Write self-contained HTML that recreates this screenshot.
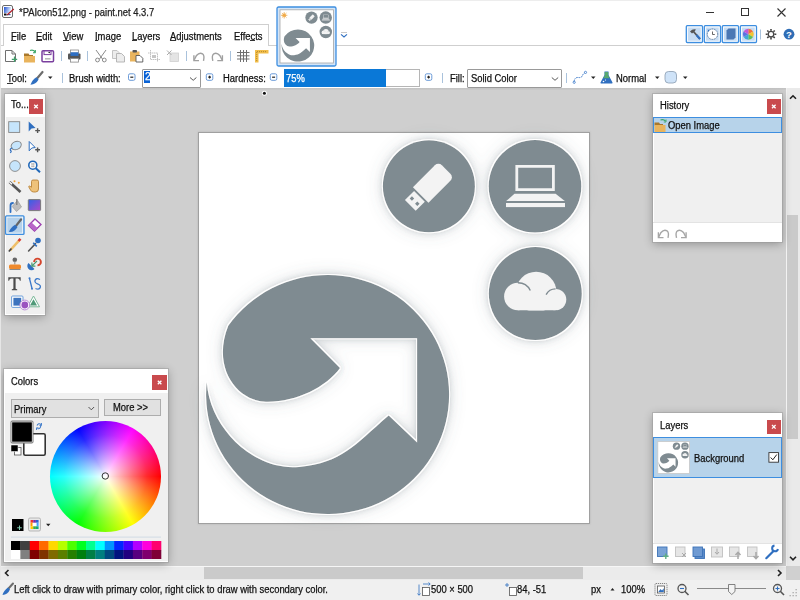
<!DOCTYPE html>
<html><head><meta charset="utf-8">
<style>
*{box-sizing:border-box}
html,body{margin:0;padding:0;width:800px;height:600px;overflow:hidden;background:#fff}
body{position:relative;font-family:"Liberation Sans",sans-serif;color:#000}
.a{position:absolute}
.t{position:absolute;font-size:10px;line-height:10px;white-space:nowrap;color:#111;transform-origin:0 0;transform:scaleX(.94);-webkit-text-stroke:0.25px currentColor}
svg{position:absolute;overflow:visible}
</style></head><body>

<!-- ===== top chrome ===== -->
<div class="a" style="left:0;top:0;width:800px;height:88px;background:#fff"></div>

<!-- title -->
<div class="t" style="left:19px;top:8px;color:#222">*PAIcon512.png - paint.net 4.3.7</div>
<!-- window controls -->
<div class="a" style="left:706px;top:12px;width:8px;height:1px;background:#333"></div>
<div class="a" style="left:741px;top:8px;width:8px;height:8px;border:1px solid #333"></div>
<svg style="left:777px;top:8px" width="9" height="9"><path d="M0.5 0.5L8.5 8.5M8.5 0.5L0.5 8.5" stroke="#333" stroke-width="1.1"/></svg>

<!-- menu tab -->
<div class="a" style="left:3px;top:24px;width:266px;height:22px;border:1px solid #cfcfcf;border-bottom:none;background:#fff"></div>
<div class="a" style="left:268px;top:45px;width:532px;height:1px;background:#cfcfcf"></div>
<div class="a" style="left:0;top:45px;width:4px;height:1px;background:#cfcfcf"></div>
<div class="t" style="left:11px;top:31.5px">File</div>
<div class="t" style="left:36px;top:31.5px">Edit</div>
<div class="t" style="left:63px;top:31.5px">View</div>
<div class="t" style="left:95px;top:31.5px">Image</div>
<div class="t" style="left:132px;top:31.5px">Layers</div>
<div class="t" style="left:170px;top:31.5px">Adjustments</div>
<div class="t" style="left:234px;top:31.5px">Effects</div>
<div class="a" style="left:11px;top:40px;width:5px;height:1px;background:#333"></div>
<div class="a" style="left:36px;top:40px;width:6px;height:1px;background:#333"></div>
<div class="a" style="left:63px;top:40px;width:6px;height:1px;background:#333"></div>
<div class="a" style="left:95px;top:40px;width:3px;height:1px;background:#333"></div>
<div class="a" style="left:132px;top:40px;width:5px;height:1px;background:#333"></div>
<div class="a" style="left:170px;top:40px;width:6px;height:1px;background:#333"></div>
<div class="a" style="left:250px;top:40px;width:5px;height:1px;background:#333"></div>



<!-- title icon -->
<svg style="left:0;top:0" width="800" height="90" viewBox="0 0 800 90">
<rect x="2.5" y="5.5" width="10" height="12" rx="1.5" fill="#fff" stroke="#6b6b6b" stroke-width="1"/>
<defs><linearGradient id="tig" x1="0" y1="0" x2="1" y2="0.3"><stop offset="0" stop-color="#1f4fd0"/><stop offset="1" stop-color="#e0eeff"/></linearGradient></defs>
<rect x="4" y="7" width="7" height="6" fill="url(#tig)"/>
<rect x="4" y="13.5" width="2.5" height="2" fill="#111"/>
<rect x="6.5" y="14" width="4" height="1.2" fill="#3a5a9a"/>
<path d="M7 15 L13.8 9" stroke="#b3202a" stroke-width="1.2"/>
<!-- New -->
<path d="M5.5 50.5 H12 L15.5 54 V61.5 H5.5 Z" fill="#fff" stroke="#707070" stroke-width="1"/>
<path d="M12 50.5 V54 H15.5" fill="none" stroke="#707070" stroke-width="1"/>
<path d="M14.5 56.5 V62 M11.8 59.3 H17.2" stroke="#3fa16b" stroke-width="1.2"/>
<!-- Open -->
<path d="M24 53.5 H28.5 L29.5 55 H33 V57 H24 Z" fill="#a9782c"/>
<rect x="24" y="56" width="11" height="6.5" fill="#e9b45d"/>
<path d="M30 50.5 Q33 49.5 35 51.5" fill="none" stroke="#3aa565" stroke-width="1.3"/>
<path d="M35.5 50 V52.8 H33" fill="#3aa565" stroke="#3aa565" stroke-width="0.8"/>
<!-- Save -->
<rect x="42" y="50.8" width="11.5" height="11" rx="1" fill="#fff" stroke="#7a3f9e" stroke-width="1.5"/>
<rect x="44" y="51" width="7" height="3.6" fill="#fff" stroke="#7a3f9e" stroke-width="1"/>
<circle cx="49.2" cy="52.5" r="0.8" fill="#222"/>
<rect x="45" y="58" width="5.5" height="1.6" fill="#b9b9b9"/>
<!-- separators -->
<rect x="61" y="51" width="1" height="10" fill="#a9c2dc"/>
<rect x="87" y="51" width="1" height="10" fill="#a9c2dc"/>
<rect x="186" y="51" width="1" height="10" fill="#a9c2dc"/>
<rect x="230" y="51" width="1" height="10" fill="#a9c2dc"/>
<!-- Print -->
<rect x="70.5" y="50" width="8" height="3" fill="#fff" stroke="#888" stroke-width="0.8"/>
<rect x="68" y="53.5" width="12.5" height="6" rx="1" fill="#555"/>
<rect x="70.5" y="52.3" width="8" height="3.6" fill="#2e6fc4"/>
<rect x="70.5" y="58.5" width="8" height="3.6" fill="#fff" stroke="#888" stroke-width="0.8"/>
<!-- Cut -->
<path d="M96 50 L102.5 59 M106 50 L99.5 59" stroke="#8a8a8a" stroke-width="1"/>
<circle cx="97.5" cy="60" r="1.9" fill="none" stroke="#8a8a8a" stroke-width="1"/>
<circle cx="104.3" cy="60" r="1.9" fill="none" stroke="#8a8a8a" stroke-width="1"/>
<!-- Copy -->
<path d="M112.5 50.5 H117 L119 52.5 V58.5 H112.5 Z" fill="#ececec" stroke="#bdbdbd" stroke-width="0.9"/>
<path d="M116.5 53.5 H121.5 L124.5 56.5 V62 H116.5 Z" fill="#ececec" stroke="#b0b0b0" stroke-width="0.9"/>
<!-- Paste -->
<rect x="130" y="51.5" width="9.5" height="10" fill="#e9b45d"/>
<rect x="132.5" y="50" width="4.5" height="2.5" rx="0.8" fill="#555"/>
<path d="M136 55.5 H140 L142.8 58.3 V62 H136 Z" fill="#fff" stroke="#555" stroke-width="0.9"/>
<!-- Crop -->
<path d="M150.5 50 V59.5 H160 M148 53 H157.5 V62" fill="none" stroke="#bcbcbc" stroke-width="0.9" stroke-dasharray="1.5 0.5"/>
<rect x="152" y="55" width="4" height="3" fill="#c5c5c5"/>
<!-- Deselect -->
<rect x="170" y="53" width="8.5" height="8.5" fill="#e4e4e4" stroke="#cfcfcf" stroke-width="0.8"/>
<path d="M167 50.5 L171.5 55 M171.5 50.5 L167 55" stroke="#ababab" stroke-width="1"/>
<!-- Undo -->
<path d="M203.5 60.8 Q204.8 55.5 202.5 53.8 Q199.5 52 196.5 55.5 L194.3 59.8" fill="none" stroke="#a0a0a0" stroke-width="1.4"/>
<path d="M193.9 55.3 V60.6 H199" fill="none" stroke="#a0a0a0" stroke-width="1.4"/>
<!-- Redo -->
<path d="M212.8 60.8 Q211.5 55.5 213.8 53.8 Q216.8 52 219.8 55.5 L222 59.8" fill="none" stroke="#a0a0a0" stroke-width="1.4"/>
<path d="M222.4 55.3 V60.6 H217.3" fill="none" stroke="#a0a0a0" stroke-width="1.4"/>
<!-- Grid -->
<path d="M240.5 50 V62 M243.5 50 V62 M246.5 50 V62 M237 52.5 H249.5 M237 55.8 H249.5 M237 59 H249.5" stroke="#707070" stroke-width="1"/>
<!-- Ruler -->
<path d="M255 50 H268.5 V53.5 H258.5 V62.5 H255 Z" fill="#f2bd4a"/>
<path d="M257 51.6 H267 M256.7 52 V61" stroke="#8a6a20" stroke-width="0.6" stroke-dasharray="1 1"/>
</svg>


<!-- right toolbar toggles -->
<svg style="left:0;top:0" width="800" height="70" viewBox="0 0 800 70">
 <g fill="#c6dcf3" stroke="#3d8ee0" stroke-width="1.3">
  <rect x="686.3" y="25.7" width="16.2" height="16.8" rx="1"/>
  <rect x="704.3" y="25.7" width="16.2" height="16.8" rx="1"/>
  <rect x="722.3" y="25.7" width="16.2" height="16.8" rx="1"/>
  <rect x="740.3" y="25.7" width="16.2" height="16.8" rx="1"/>
 </g>
 <g fill="none" stroke="#fff" stroke-width="0.9">
  <rect x="687.6" y="27" width="13.6" height="14.2"/>
  <rect x="705.6" y="27" width="13.6" height="14.2"/>
  <rect x="723.6" y="27" width="13.6" height="14.2"/>
  <rect x="741.6" y="27" width="13.6" height="14.2"/>
 </g>
 <!-- hammer -->
 <path d="M690 31.5 Q692.5 28.5 696 29.5 L694.5 31.5 L692 33.5 Z" fill="#555"/>
 <path d="M693 31 L700 39" stroke="#555" stroke-width="1.8"/>
 <path d="M696.5 35 L700 39" stroke="#2f6fc0" stroke-width="2"/>
 <!-- history clock -->
 <circle cx="712.5" cy="34.2" r="5.2" fill="#fff" stroke="#3a5f8a" stroke-width="0.8" stroke-dasharray="1.2 0.6"/>
 <path d="M712.5 31.5 V34.5 H714.8" fill="none" stroke="#555" stroke-width="0.9"/>
 <path d="M707.5 29.5 L709.5 30 L708.3 31.8 Z" fill="#2f6fc0"/>
 <!-- layers -->
 <path d="M726.5 30.5 L728.5 28.5 H735.5 V37.5 L733.5 39.5 H726.5 Z" fill="#4a77b4"/>
 <!-- colors -->
 <g transform="translate(748.3 34.2)">
  <path d="M0 0 L0 -5.5 A5.5 5.5 0 0 1 4.76 -2.75 Z" fill="#f2703c"/>
  <path d="M0 0 L4.76 -2.75 A5.5 5.5 0 0 1 4.76 2.75 Z" fill="#f5c431"/>
  <path d="M0 0 L4.76 2.75 A5.5 5.5 0 0 1 0 5.5 Z" fill="#5fc05a"/>
  <path d="M0 0 L0 5.5 A5.5 5.5 0 0 1 -4.76 2.75 Z" fill="#3fa9d8"/>
  <path d="M0 0 L-4.76 2.75 A5.5 5.5 0 0 1 -4.76 -2.75 Z" fill="#5b72e0"/>
  <path d="M0 0 L-4.76 -2.75 A5.5 5.5 0 0 1 0 -5.5 Z" fill="#c25ad6"/>
 </g>
 <rect x="760" y="29.5" width="1" height="10" fill="#a9c2dc"/>
 <!-- gear -->
 <g transform="translate(771 34.2)" fill="none" stroke="#444">
  <circle r="2.8" stroke-width="1.4"/>
  <path d="M0 -5.3 V-3.4 M0 5.3 V3.4 M-5.3 0 H-3.4 M5.3 0 H3.4 M-3.75 -3.75 L-2.4 -2.4 M3.75 3.75 L2.4 2.4 M-3.75 3.75 L-2.4 2.4 M3.75 -3.75 L2.4 -2.4" stroke-width="1.6"/>
 </g>
 <!-- help -->
 <circle cx="789" cy="34.2" r="5.4" fill="#2f6db5"/>
 <text x="789" y="37.9" font-family="Liberation Sans" font-weight="bold" font-size="9.5" fill="#fff" text-anchor="middle">?</text>
 <!-- thumbnail -->
 <rect x="277" y="7" width="59" height="59" rx="1.5" fill="#d3e5f8" stroke="#3d8ee0" stroke-width="1.3"/>
 <rect x="280" y="9.8" width="53.4" height="53.2" fill="#fff" stroke="#a6a6a6" stroke-width="0.8"/>
 <use href="#shapes" x="280.5" y="10.3" width="52.5" height="52.5"/>
 <use href="#glyphs" x="280.5" y="10.3" width="52.5" height="52.5"/>
 <g transform="translate(284.2 15.3)" stroke="#f0a848" stroke-width="0.8">
  <circle r="1.8" fill="#f5b85a" stroke="none"/>
  <path d="M0 -3.2 V3.2 M-3.2 0 H3.2 M-2.3 -2.3 L2.3 2.3 M-2.3 2.3 L2.3 -2.3"/>
 </g>
 <!-- dropdown chevron -->
 <rect x="341" y="32" width="6" height="1" fill="#c9c9c9"/>
 <path d="M341 34.3 L344 37 L347 34.3" fill="none" stroke="#2f6fc0" stroke-width="1.1"/>
</svg>

<!-- ===== workspace ===== -->

<div class="a" style="left:0;top:88px;width:786px;height:478px;background:#cfcfcf"></div>
<div class="a" style="left:0;top:88px;width:786px;height:2px;background:linear-gradient(#c2c2c2,#cbcbcb)"></div>

<!-- canvas -->
<div class="a" style="left:198px;top:132px;width:392px;height:392px;background:#a0a0a0;box-shadow:0 0 2px #b4b4b4"></div>
<div class="a" style="left:199px;top:133px;width:390px;height:390px;background:#fff"></div>


<!-- canvas art -->
<svg style="left:0;top:0;width:0;height:0">
<defs>
<filter id="sh" x="-25%" y="-25%" width="150%" height="150%">
 <feMorphology in="SourceAlpha" operator="dilate" radius="0.8" result="dil"/>
 <feGaussianBlur in="SourceAlpha" stdDeviation="2.5" result="b1"/>
 <feGaussianBlur in="SourceAlpha" stdDeviation="8" result="b2"/>
 <feFlood flood-color="#5a6870" flood-opacity="0.3"/>
 <feComposite in2="b1" operator="in" result="s1"/>
 <feFlood flood-color="#5a6870" flood-opacity="0.28"/>
 <feComposite in2="b2" operator="in" result="s2"/>
 <feFlood flood-color="#ffffff"/>
 <feComposite in2="dil" operator="in" result="rim"/>
 <feMerge><feMergeNode in="s2"/><feMergeNode in="s1"/><feMergeNode in="rim"/><feMergeNode in="SourceGraphic"/></feMerge>
</filter>
<symbol id="shapes" viewBox="198 132 391 391">
 <path d="M206.75 382.25 C209.9 428.7 254.4 471.4 299.1 466.9 C342.6 462.4 352.9 446.4 388.7 415.5 L417.1 442.5 L417.1 338.2 L310.4 338.2 L340 368 C326.2 387.2 295 402.5 265.9 401.7 C236.5 400.8 211.5 367.1 228.3 325.7 A121.5 119.5 0 1 1 206.75 382.25 Z" fill="#7f8b91"/>
 <circle cx="428.9" cy="186.2" r="46" fill="#7f8b91"/>
 <circle cx="535" cy="186.3" r="46.3" fill="#7f8b91"/>
 <circle cx="535.3" cy="293.6" r="46.5" fill="#7f8b91"/>
</symbol>
<symbol id="glyphs" viewBox="198 132 391 391">
 <g transform="translate(420.7 195) rotate(-45)" fill="#f3f3f3">
  <path d="M0 -11 H31 A5 5 0 0 1 36 -6 V6 A5 5 0 0 1 31 11 H0 Z"/>
  <path d="M-14.7 -7.6 H-1.8 V7.6 H-14.7 Z M-10.2 -5.4 V-2.2 H-7 V-5.4 Z M-10.2 2.2 V5.4 H-7 V2.2 Z" fill-rule="evenodd"/>
 </g>
 <path d="M515.4 164.9 H554.8 V191 H515.4 Z M518.2 167.7 V188.2 H552 V167.7 Z" fill="#f3f3f3" fill-rule="evenodd"/>
 <path d="M514.5 193.7 H555.6 L564.8 201 H506.2 Z" fill="#f3f3f3"/>
 <rect x="506" y="203" width="59" height="4.1" fill="#f3f3f3"/>
 <clipPath id="cc"><rect x="490" y="260" width="90" height="50.6"/></clipPath>
 <g fill="#f3f3f3" clip-path="url(#cc)">
  <circle cx="536.15" cy="292.05" r="20.3"/>
  <rect x="517.9" y="292" width="37.7" height="18.5"/>
  <circle cx="517.9" cy="296.6" r="13.8"/>
  <circle cx="555.6" cy="299.6" r="10.7"/>
 </g>
 <path d="M517.9 282.8 A13.8 13.8 0 0 1 530.3 290.5" fill="none" stroke="#7f8b91" stroke-width="1.4"/>
 <path d="M546.1 294.6 A10.7 10.7 0 0 1 555.6 288.9" fill="none" stroke="#7f8b91" stroke-width="1.4"/>
</symbol>
</defs>
</svg>
<svg style="left:198px;top:132px" width="391" height="391" viewBox="198 132 391 391">
 <g filter="url(#sh)"><use href="#shapes" x="198" y="132" width="391" height="391"/></g>
 <use href="#glyphs" x="198" y="132" width="391" height="391"/>
</svg>

<!-- scrollbars -->
<div class="a" style="left:786px;top:88px;width:14px;height:478px;background:#eaeaea;border-left:1px solid #f2f2f2"></div>
<div class="a" style="left:787px;top:215px;width:11px;height:224px;background:#cacaca"></div>
<div class="a" style="left:0;top:566px;width:786px;height:14px;background:#ebebeb;border-top:1px solid #f6f6f6"></div>
<div class="a" style="left:204px;top:567px;width:379px;height:12px;background:#cacaca"></div>
<div class="a" style="left:786px;top:566px;width:14px;height:14px;background:#d0d0d0"></div>


<!-- tool options bar -->
<div class="t" style="left:7px;top:74px">Tool:</div>
<div class="a" style="left:7px;top:83px;width:6px;height:1px;background:#333"></div>
<div class="t" style="left:69px;top:74px">Brush width:</div>
<div class="a" style="left:142px;top:69px;width:59px;height:19px;border:1px solid #999;border-radius:1px;background:#fff"></div>
<div class="a" style="left:144.2px;top:71px;width:6px;height:11.7px;background:#0a63d6"></div>
<div class="t" style="left:144.8px;top:71.3px;color:#fff;font-size:11px;line-height:11px">2</div>
<div class="t" style="left:223px;top:74px">Hardness:</div>
<div class="a" style="left:284px;top:69px;width:136px;height:18px;border:1px solid #b5b5b5;border-left:none;background:#fff"></div>
<div class="a" style="left:284px;top:69px;width:102px;height:18px;background:#0a78d7"></div>
<div class="t" style="left:286px;top:74px;color:#fff">75%</div>
<div class="t" style="left:450px;top:74px">Fill:</div>
<div class="a" style="left:467px;top:69px;width:95px;height:19px;border:1px solid #999;border-radius:1px;background:#fff"></div>
<div class="t" style="left:471px;top:74px">Solid Color</div>
<div class="t" style="left:616px;top:74px">Normal</div>
<svg style="left:0;top:64px" width="800" height="30" viewBox="0 64 800 30">
 <!-- brush -->
 <path d="M42.5 72 L37 78.5" stroke="#6d6d6d" stroke-width="2.2" stroke-linecap="round"/>
 <path d="M36.3 77.3 L38.6 79.6 Q36 84.5 30.5 84.8 Q32 80 36.3 77.3 Z" fill="#2f6fc0"/>
 <path d="M48 76.5 H52.5 L50.25 79 Z" fill="#222"/>
 <rect x="62" y="73" width="1" height="10" fill="#a9c2dc"/>
 <!-- minus/plus buttons -->
 <rect x="128.5" y="73.8" width="6.5" height="6.5" rx="1.5" fill="#fff" stroke="#6a9ad8" stroke-width="1"/>
 <rect x="130.3" y="76.6" width="3" height="1.2" fill="#222"/>
 <path d="M190 77.5 L193.2 80.3 L196.4 77.5" fill="none" stroke="#444" stroke-width="0.9"/>
 <rect x="206.3" y="73.8" width="6.5" height="6.5" rx="1.5" fill="#fff" stroke="#6a9ad8" stroke-width="1"/>
 <path d="M208.2 77.1 H211 M209.6 75.7 V78.5" stroke="#222" stroke-width="1.1"/>
 <rect x="270.3" y="73.8" width="6.5" height="6.5" rx="1.5" fill="#fff" stroke="#6a9ad8" stroke-width="1"/>
 <rect x="272.1" y="76.6" width="3" height="1.2" fill="#222"/>
 <rect x="425.3" y="73.8" width="6.5" height="6.5" rx="1.5" fill="#fff" stroke="#6a9ad8" stroke-width="1"/>
 <path d="M427.2 77.1 H430 M428.6 75.7 V78.5" stroke="#222" stroke-width="1.1"/>
 <rect x="442" y="73" width="1" height="10" fill="#a9c2dc"/>
 <path d="M551.8 77.5 L555 80.3 L558.2 77.5" fill="none" stroke="#444" stroke-width="0.9"/>
 <rect x="566" y="73" width="1" height="10" fill="#a9c2dc"/>
 <!-- curve icon -->
 <path d="M574 82 Q574.5 77 578.5 77.5 Q581.5 78 582.5 75.5 Q583.5 73 585.5 72.5" fill="none" stroke="#3a78c9" stroke-width="1" stroke-dasharray="1.6 0.8"/>
 <circle cx="574.2" cy="82.3" r="1.1" fill="#fff" stroke="#3a78c9" stroke-width="0.8"/>
 <circle cx="585.5" cy="72.4" r="1.1" fill="#fff" stroke="#3a78c9" stroke-width="0.8"/>
 <path d="M591 76.5 H595.5 L593.25 79 Z" fill="#222"/>
 <!-- flask -->
 <path d="M604.5 71.5 H608.5 V75 L612.5 82.5 Q612.8 83.5 611.8 83.5 H601.2 Q600.2 83.5 600.5 82.5 L604.5 75 Z" fill="#2f6fc0"/>
 <path d="M604.7 72 H608.3 V75.5 L609.8 78.3 H603.2 L604.7 75.5 Z" fill="#58a870"/>
 <circle cx="603.5" cy="81.5" r="0.8" fill="#fff"/>
 <circle cx="605.5" cy="80" r="0.6" fill="#fff"/>
 <path d="M655 76.5 H659.5 L657.25 79 Z" fill="#222"/>
 <!-- shape icon -->
 <rect x="665" y="71.5" width="11.5" height="11.5" rx="3.5" fill="#cfe3f8" stroke="#8a9cb0" stroke-width="0.8"/>
 <path d="M683 76.5 H687.5 L685.25 79 Z" fill="#222"/>
 <!-- brush cursor -->
 <circle cx="264.4" cy="93.3" r="2.5" fill="#fff"/>
 <circle cx="264.4" cy="93.3" r="1.5" fill="#111"/>
</svg>

<!-- status bar -->
<div class="a" style="left:0;top:580px;width:800px;height:20px;background:#f0f0f0"></div>
<div class="t" style="left:14px;top:585px">Left click to draw with primary color, right click to draw with secondary color.</div>
<div class="t" style="left:431px;top:585px">500 × 500</div>
<div class="t" style="left:517px;top:585px">84, -51</div>
<div class="t" style="left:591px;top:585px">px</div>
<div class="t" style="left:621px;top:585px">100%</div>

<!-- tools panel -->
<div class="a" style="left:5px;top:94px;width:40px;height:221px;background:#f0f0f0;border:1px solid #fff;border-right:none;border-top:none;box-shadow:0 0 0 1px rgba(150,150,150,.45),0 2px 9px rgba(0,0,0,.3)"></div>
<div class="a" style="left:5px;top:94px;width:40px;height:23px;background:#fff"></div>
<div class="t" style="left:11px;top:100px">To...</div>
<div class="a" style="left:29px;top:99px;width:14px;height:15px;background:#c94a4d"></div>

<svg style="left:0;top:90px" width="50" height="230" viewBox="0 90 50 230">
 <!-- close x -->
 <path d="M34.2 104.7 L37.8 108.3 M37.8 104.7 L34.2 108.3" stroke="#fff" stroke-width="1.3"/>
 <!-- rect select -->
 <rect x="8.7" y="121.7" width="11" height="10.7" fill="#c6e5fc" stroke="#858585" stroke-width="0.9"/>
 <!-- move selected -->
 <path d="M28.7 121.5 L35.6 128 L31.5 128.5 L28.7 131.6 Z" fill="#2f6fc0"/>
 <path d="M37.6 128.3 V133 M35.2 130.6 H40" stroke="#555" stroke-width="1.4"/>
 <!-- lasso -->
 <ellipse cx="16.2" cy="145.5" rx="5.3" ry="4" transform="rotate(-25 16.2 145.5)" fill="#c6e5fc" stroke="#858585" stroke-width="0.9"/>
 <path d="M12.5 148 Q9.5 148.5 10.5 150.5 Q12 151 10.3 152.8" fill="none" stroke="#2f6fc0" stroke-width="1.2"/>
 <!-- move selection -->
 <path d="M29.2 141.5 L35.2 147.5 L31.8 148 L29.2 150.8 Z" fill="#fff" stroke="#2f6fc0" stroke-width="1"/>
 <path d="M37.6 147.5 V152.2 M35.2 149.8 H40" stroke="#555" stroke-width="1.4"/>
 <!-- ellipse select -->
 <circle cx="15" cy="166" r="5.4" fill="#c6e5fc" stroke="#858585" stroke-width="0.9"/>
 <!-- zoom -->
 <circle cx="32.8" cy="165.2" r="4" fill="#fff" stroke="#1f67b8" stroke-width="1.6"/>
 <path d="M35.8 168.2 L40 172.2" stroke="#1f67b8" stroke-width="2"/>
 <path d="M31.3 164 h3 M31.3 166.4 h3 M32 163 v4.4 M33.8 163 v4.4" stroke="#999" stroke-width="0.6"/>
 <!-- magic wand -->
 <path d="M9.5 182 L20.5 192" stroke="#555" stroke-width="2.6"/>
 <path d="M9.5 182 L12 184.3" stroke="#fff" stroke-width="1.4"/>
 <circle cx="14.5" cy="181.2" r="1" fill="#eea33d"/>
 <circle cx="18.8" cy="182.8" r="1" fill="#eea33d"/>
 <!-- hand -->
 <path d="M31.5 181.5 Q31.5 180 33 180 H37 Q38.5 180 38.5 181.5 V189 Q38.5 192 35.5 192 H33.5 Q31.5 192 30.5 190 L28.8 187 Q28.5 186 29.5 186 L31.5 187.2 Z" fill="#eec27a" stroke="#b27a2c" stroke-width="0.8"/>
 <!-- bucket -->
 <path d="M17.5 200.5 L21.5 207 L16.5 211.5 L12.2 206.5 Z" fill="#bdbdbd" stroke="#999" stroke-width="0.7"/>
 <path d="M16.8 199 V205" stroke="#777" stroke-width="1.2"/>
 <path d="M10.5 212 V205.5 Q10.5 203 13 203" fill="none" stroke="#2f6fc0" stroke-width="1.8" stroke-linecap="round"/>
 <!-- gradient -->
 <defs><linearGradient id="gr" x1="0" y1="0" x2="1" y2="1"><stop offset="0" stop-color="#2f62e8"/><stop offset="1" stop-color="#b048c8"/></linearGradient></defs>
 <rect x="28.3" y="199.6" width="12.3" height="11" rx="0.8" fill="url(#gr)" stroke="#7a7a7a" stroke-width="1"/>
 <!-- selected paintbrush -->
 <rect x="5.6" y="215.8" width="18.4" height="18.6" rx="1" fill="#b5d1ea" stroke="#3d8ee0" stroke-width="1.3"/>
 <rect x="6.9" y="217.1" width="15.8" height="16" fill="none" stroke="#fff" stroke-width="0.7"/>
 <path d="M21 219.5 L16.2 225.6" stroke="#666" stroke-width="2.3" stroke-linecap="round"/>
 <path d="M15 224.8 L17.5 227 Q14.5 232.5 9 232 Q10.5 227.5 15 224.8 Z" fill="#2f6fc0"/>
 <!-- eraser -->
 <path d="M28.5 225.5 L35 219 L41 224.5 L34.5 231 Z" fill="#fff" stroke="#9b3dae" stroke-width="1.3"/>
 <path d="M28.5 225.5 L31.5 222.5 L37.5 228 L34.5 231 Z" fill="#b865c8"/>
 <!-- pencil -->
 <path d="M10 250.5 L19.2 240.3" stroke="#eebf6a" stroke-width="2.6"/>
 <path d="M18.5 241 L20.5 238.8" stroke="#d83a2e" stroke-width="2.6"/>
 <path d="M8.8 251.5 L11.5 248.5" stroke="#444" stroke-width="1.6"/>
 <!-- color picker -->
 <path d="M28.6 251 L35.5 243.6" stroke="#555" stroke-width="1.6" stroke-linecap="round"/>
 <path d="M33.2 242.8 L36.8 246.4" stroke="#2f6fc0" stroke-width="1.6"/>
 <circle cx="38" cy="240.5" r="2.8" fill="#2f6fc0"/>
 <!-- clone stamp -->
 <circle cx="14.8" cy="259.8" r="2.3" fill="#666"/>
 <rect x="14.2" y="261.5" width="1.2" height="3" fill="#999"/>
 <rect x="9" y="264.5" width="12" height="4.5" rx="1.5" fill="#ef8a2e"/>
 <rect x="9.5" y="269" width="11" height="1" fill="#8a8a8a"/>
 <!-- recolor -->
 <path d="M34.1 262 A3.4 3.4 0 1 1 37.5 265.4" fill="none" stroke="#d5452c" stroke-width="1.9"/>
 <path d="M34.47 268.97 A4.2 4.2 0 0 1 28.53 263.03 Z" fill="#2f6fc0"/>
 <path d="M37 261 L32.3 265.7 M31.9 262.6 V266.1 H35.4" fill="none" stroke="#4a9a72" stroke-width="1.2"/>
 <!-- text -->
 <path d="M8.3 277.3 H20.7 V280.8 H19.9 Q19.6 278.6 17.6 278.6 H15.6 V288.6 Q15.6 289.3 17.2 289.3 V290.2 H11.8 V289.3 Q13.4 289.3 13.4 288.6 V278.6 H11.4 Q9.4 278.6 9.1 280.8 H8.3 Z" fill="#4a4a4a"/>
 <!-- line/curve -->
 <path d="M29.5 278.5 L32 288.5" stroke="#3a78c9" stroke-width="1.3"/>
 <path d="M40 279.5 Q36 277.5 35 280.5 Q34.5 283 38 284 Q41.5 285.5 40 288 Q38.5 290 35.5 288.5" fill="none" stroke="#3a78c9" stroke-width="1.3"/>
 <circle cx="29.5" cy="278.3" r="1" fill="#3a78c9"/>
 <circle cx="32" cy="288.8" r="1" fill="#3a78c9"/>
 <!-- shapes -->
 <rect x="11.6" y="296" width="11.4" height="11.4" rx="1" fill="#fff" stroke="#6d9fdb" stroke-width="1"/>
 <rect x="13.4" y="297.8" width="7.8" height="7.8" fill="#3d74be"/>
 <path d="M33.5 296 L39.5 306.8 H27.5 Z" fill="#fff" stroke="#79b898" stroke-width="1"/>
 <path d="M33.5 299.3 L37 305.6 H30 Z" fill="#4f9a78"/>
 <circle cx="24.8" cy="305" r="4.9" fill="#fff" stroke="#b98ad8" stroke-width="1"/>
 <circle cx="24.8" cy="305" r="3.4" fill="#9a52c0"/>
</svg>

<!-- colors panel -->
<div class="a" style="left:4px;top:369px;width:164px;height:193px;background:#f0f0f0;border:1px solid #fff;border-right:none;border-top:none;box-shadow:0 0 0 1px rgba(150,150,150,.45),0 2px 9px rgba(0,0,0,.3)"></div>
<div class="a" style="left:4px;top:369px;width:164px;height:24px;background:#fff"></div>
<div class="t" style="left:11px;top:376.6px">Colors</div>
<div class="a" style="left:152px;top:375px;width:15px;height:15px;background:#c94a4d"></div>


<div class="a" style="left:11px;top:399px;width:88px;height:19px;background:#e1e1e1;border:1px solid #adadad"></div>
<div class="t" style="left:14px;top:405px">Primary</div>
<div class="a" style="left:104px;top:399px;width:57px;height:17px;background:#e1e1e1;border:1px solid #adadad"></div>
<div class="t" style="left:113px;top:403px">More &gt;&gt;</div>
<div class="a" style="left:50px;top:420.5px;width:111px;height:111px;border-radius:50%;background:conic-gradient(from 90deg,#f00,#ff0,#0f0,#0ff,#00f,#f0f,#f00)"></div>
<div class="a" style="left:50px;top:420.5px;width:111px;height:111px;border-radius:50%;background:radial-gradient(circle closest-side,#fff 0%,rgba(255,255,255,.7) 25%,rgba(255,255,255,.42) 50%,rgba(255,255,255,.16) 75%,rgba(255,255,255,0) 100%)"></div>
<svg style="left:0;top:360px" width="180" height="210" viewBox="0 360 180 210">
 <path d="M157.8 380.7 L161.4 384.3 M161.4 380.7 L157.8 384.3" stroke="#fff" stroke-width="1.3"/>
 <path d="M88.5 407 L91.3 409.8 L94.1 407" fill="none" stroke="#444" stroke-width="0.9"/>
 <rect x="23.8" y="433.8" width="21.4" height="21.4" rx="1.5" fill="#fff" stroke="#333" stroke-width="1.6"/>
 <rect x="11.3" y="421.3" width="21.4" height="21.4" rx="1" fill="#000" stroke="#777" stroke-width="1.6"/>
 <rect x="11.8" y="422" width="20.4" height="20" fill="none" stroke="#fff" stroke-width="0.6"/>
 <rect x="14.5" y="447.5" width="6.5" height="7.5" fill="#fff" stroke="#555" stroke-width="0.8"/>
 <rect x="11" y="445" width="7" height="6.5" fill="#000" stroke="#fff" stroke-width="0.5"/>
 <path d="M37 425.5 Q38.5 422.5 41 424.5 M40.8 426 Q40 429.5 37.5 428.5" fill="none" stroke="#3a78c9" stroke-width="1.1"/>
 <path d="M41.5 423 V425.5 H39.5 M36.5 430 V427.8 H38.5" fill="none" stroke="#3a78c9" stroke-width="0.9"/>
 <circle cx="105.3" cy="476" r="3.2" fill="none" stroke="#333" stroke-width="1"/>
 <rect x="12" y="519" width="11.5" height="12" fill="#000"/>
 <path d="M19.5 525.5 V530 M17.2 527.8 H21.8" stroke="#7fc8b0" stroke-width="1"/>
 <rect x="28.5" y="518" width="12" height="13" rx="1.5" fill="#e8e8e8" stroke="#aaa" stroke-width="0.8"/>
 <rect x="30.5" y="520" width="8" height="9" fill="#fff"/>
 <path d="M30.5 520 h2.7 v2.7 h-2.7 Z" fill="#e33"/><path d="M33.2 520 h2.7 v2.7 h-2.7 Z" fill="#7a2ea8"/><path d="M35.9 520 h2.7 v2.7 h-2.7 Z" fill="#2a5fd0"/>
 <path d="M30.5 522.7 h2 v3.6 h-2 Z" fill="#f90"/><path d="M36.6 522.7 h2 v3.6 h-2 Z" fill="#3fa0ff"/>
 <path d="M30.5 526.3 h2.7 v2.7 h-2.7 Z" fill="#fc0"/><path d="M33.2 526.3 h2.7 v2.7 h-2.7 Z" fill="#4a4"/><path d="M35.9 526.3 h2.7 v2.7 h-2.7 Z" fill="#1a7"/>
 <path d="M46 523.8 H50.5 L48.25 526.3 Z" fill="#222"/>
 <rect x="11" y="536.5" width="150" height="1.2" fill="#d5dde5"/>
 <rect x="11.00" y="541" width="9.68" height="9.2" fill="#000000"/><rect x="11.00" y="550" width="9.68" height="9" fill="#ffffff"/><rect x="20.38" y="541" width="9.68" height="9.2" fill="#404040"/><rect x="20.38" y="550" width="9.68" height="9" fill="#808080"/><rect x="29.75" y="541" width="9.68" height="9.2" fill="#ff0000"/><rect x="29.75" y="550" width="9.68" height="9" fill="#7f0000"/><rect x="39.12" y="541" width="9.68" height="9.2" fill="#ff6a00"/><rect x="39.12" y="550" width="9.68" height="9" fill="#7f3300"/><rect x="48.50" y="541" width="9.68" height="9.2" fill="#ffd800"/><rect x="48.50" y="550" width="9.68" height="9" fill="#7f6a00"/><rect x="57.88" y="541" width="9.68" height="9.2" fill="#b6ff00"/><rect x="57.88" y="550" width="9.68" height="9" fill="#5b7f00"/><rect x="67.25" y="541" width="9.68" height="9.2" fill="#4cff00"/><rect x="67.25" y="550" width="9.68" height="9" fill="#267f00"/><rect x="76.62" y="541" width="9.68" height="9.2" fill="#00ff21"/><rect x="76.62" y="550" width="9.68" height="9" fill="#007f0e"/><rect x="86.00" y="541" width="9.68" height="9.2" fill="#00ff90"/><rect x="86.00" y="550" width="9.68" height="9" fill="#007f46"/><rect x="95.38" y="541" width="9.68" height="9.2" fill="#00ffff"/><rect x="95.38" y="550" width="9.68" height="9" fill="#007f7f"/><rect x="104.75" y="541" width="9.68" height="9.2" fill="#0094ff"/><rect x="104.75" y="550" width="9.68" height="9" fill="#004a7f"/><rect x="114.12" y="541" width="9.68" height="9.2" fill="#0026ff"/><rect x="114.12" y="550" width="9.68" height="9" fill="#00137f"/><rect x="123.50" y="541" width="9.68" height="9.2" fill="#4800ff"/><rect x="123.50" y="550" width="9.68" height="9" fill="#21007f"/><rect x="132.88" y="541" width="9.68" height="9.2" fill="#b200ff"/><rect x="132.88" y="550" width="9.68" height="9" fill="#57007f"/><rect x="142.25" y="541" width="9.68" height="9.2" fill="#ff00dc"/><rect x="142.25" y="550" width="9.68" height="9" fill="#7f006e"/><rect x="151.62" y="541" width="9.68" height="9.2" fill="#ff006e"/><rect x="151.62" y="550" width="9.68" height="9" fill="#7f0037"/>
</svg>

<!-- history panel -->
<div class="a" style="left:653px;top:94px;width:129px;height:148px;background:#f0f0f0;border:1px solid #fff;border-right:none;border-top:none;box-shadow:0 0 0 1px rgba(150,150,150,.45),0 2px 9px rgba(0,0,0,.3)"></div>
<div class="a" style="left:653px;top:94px;width:129px;height:23px;background:#fff"></div>
<div class="t" style="left:660px;top:100.8px">History</div>
<div class="a" style="left:766.5px;top:99px;width:14.5px;height:15px;background:#c94a4d"></div>
<div class="a" style="left:653px;top:117px;width:129px;height:16px;background:#b7d3ea;border:1px solid #3d8ee0"></div>
<div class="t" style="left:668px;top:121px">Open Image</div>
<div class="a" style="left:653px;top:222px;width:129px;height:1px;background:#e3e3e3"></div>
<div class="a" style="left:653px;top:223px;width:129px;height:19px;background:#fff"></div>

<!-- layers panel -->
<div class="a" style="left:653px;top:413px;width:129px;height:150px;background:#f0f0f0;border:1px solid #fff;border-right:none;border-top:none;box-shadow:0 0 0 1px rgba(150,150,150,.45),0 2px 9px rgba(0,0,0,.3)"></div>
<div class="a" style="left:653px;top:413px;width:129px;height:24px;background:#fff"></div>
<div class="t" style="left:660px;top:420.8px">Layers</div>
<div class="a" style="left:766.7px;top:419.6px;width:14.3px;height:14.4px;background:#c94a4d"></div>
<div class="a" style="left:653px;top:437px;width:129px;height:41px;background:#b7d3ea;border:1px solid #3d8ee0"></div>
<div class="t" style="left:694px;top:453.6px">Background</div>
<div class="a" style="left:653px;top:543px;width:129px;height:1px;background:#e3e3e3"></div>
<div class="a" style="left:653px;top:544px;width:129px;height:19px;background:#fff"></div>

<svg style="left:640px;top:90px" width="160" height="480" viewBox="640 90 160 480">
 <path d="M772 104.7 L775.6 108.3 M775.6 104.7 L772 108.3" stroke="#fff" stroke-width="1.3"/>
 <path d="M772 425 L775.6 428.6 M775.6 425 L772 428.6" stroke="#fff" stroke-width="1.3"/>
 <!-- open image folder -->
 <path d="M654.5 122.5 H659 L660 124 H663 V125.5 H654.5 Z" fill="#a9782c"/>
 <rect x="654.5" y="125" width="11" height="7" fill="#e9b45d"/>
 <path d="M660.5 120 Q663.5 119 665.5 121" fill="none" stroke="#3aa565" stroke-width="1.2"/>
 <path d="M666 119.5 V122 H663.8" fill="none" stroke="#3aa565" stroke-width="0.9"/>
 <!-- undo / redo -->
 <path d="M668 237.8 Q669.3 232.5 667 230.8 Q664 229 661 232.5 L658.8 236.8" fill="none" stroke="#a6a6a6" stroke-width="1.4"/>
 <path d="M658.4 232.3 V237.6 H663.5" fill="none" stroke="#a6a6a6" stroke-width="1.4"/>
 <path d="M676.5 237.8 Q675.2 232.5 677.5 230.8 Q680.5 229 683.5 232.5 L685.7 236.8" fill="none" stroke="#a6a6a6" stroke-width="1.4"/>
 <path d="M686.1 232.3 V237.6 H681" fill="none" stroke="#a6a6a6" stroke-width="1.4"/>
 <!-- layer thumbnail -->
 <rect x="657.8" y="441.5" width="31.6" height="32" fill="#fff" stroke="#c8c8c8" stroke-width="0.8"/>
 <use href="#shapes" x="658" y="441.8" width="31.3" height="31.3"/>
 <use href="#glyphs" x="658" y="441.8" width="31.3" height="31.3"/>
 <!-- checkbox -->
 <rect x="768.9" y="452.6" width="9.6" height="9.6" fill="#fff" stroke="#333" stroke-width="0.9"/>
 <path d="M770.7 457.5 L772.8 459.8 L776.8 454.5" fill="none" stroke="#222" stroke-width="1"/>
 <!-- footer icons -->
 <rect x="657.5" y="547" width="9.5" height="9.5" fill="#7aa3d6" stroke="#3d73b8" stroke-width="0.9"/>
 <path d="M665.8 553.5 V559 M663 556.2 H668.6" stroke="#5fae84" stroke-width="1.4"/>
 <rect x="675.5" y="547" width="9.5" height="9.5" fill="#e6e6e6" stroke="#c0c0c0" stroke-width="0.9"/>
 <path d="M682 553 L686 557 M686 553 L682 557" stroke="#aaa" stroke-width="1"/>
 <rect x="695" y="549" width="9.5" height="9.5" fill="#5c8bc9" stroke="#3d73b8" stroke-width="0.9"/>
 <rect x="693" y="547" width="9.5" height="9.5" fill="#6f9ad2" stroke="#3d73b8" stroke-width="0.9"/>
 <rect x="711.5" y="547" width="11" height="10" fill="#e6e6e6" stroke="#c0c0c0" stroke-width="0.9"/>
 <path d="M717 548.5 V554 M715 552 L717 554.3 L719 552" fill="none" stroke="#aaa" stroke-width="1"/>
 <rect x="729.5" y="547" width="9.5" height="9.5" fill="#e6e6e6" stroke="#c0c0c0" stroke-width="0.9"/>
 <path d="M738 559 V552.5 M735.5 555 L738 552.3 L740.5 555" fill="none" stroke="#a8a8a8" stroke-width="1.5"/>
 <rect x="747.5" y="547" width="9.5" height="9.5" fill="#e6e6e6" stroke="#c0c0c0" stroke-width="0.9"/>
 <path d="M756 552 V558.5 M753.5 556 L756 558.7 L758.5 556" fill="none" stroke="#a8a8a8" stroke-width="1.5"/>
 <path d="M766.3 558.2 L772.8 551.7" stroke="#2f6fc0" stroke-width="2.2" stroke-linecap="round"/>
 <path d="M777.9 549 A2.9 2.9 0 1 1 774.5 545.6" fill="none" stroke="#2f6fc0" stroke-width="2"/>
 <!-- scroll arrows -->
 <path d="M790 98.8 L793 95.8 L796 98.8" fill="none" stroke="#222" stroke-width="1.6"/>
 <path d="M790 556.8 L793 559.8 L796 556.8" fill="none" stroke="#222" stroke-width="1.6"/>
 <path d="M778 570 L781 573 L778 576" fill="none" stroke="#222" stroke-width="1.6"/>
</svg>
<svg style="left:0;top:560px" width="800" height="40" viewBox="0 560 800 40">
 <path d="M8.5 570 L5.5 573 L8.5 576" fill="none" stroke="#222" stroke-width="1.6"/>
 <!-- status brush -->
 <path d="M13 583.5 L8.5 588.5" stroke="#6d6d6d" stroke-width="2" stroke-linecap="round"/>
 <path d="M8 587.5 L10 589.5 Q7.8 594.5 2.5 595 Q4 590 8 587.5 Z" fill="#2f6fc0"/>
 <!-- size icon -->
 <rect x="422.5" y="587.5" width="7" height="8" fill="#fff" stroke="#555" stroke-width="0.8"/>
 <path d="M419 584.5 V595 M417.5 593.5 L419 595.3 L420.5 593.5 M423 584 H430 M428.5 582.5 L430.2 584 L428.5 585.5" fill="none" stroke="#2f6fc0" stroke-width="0.8"/>
 <!-- cursor icon -->
 <rect x="509.5" y="587.5" width="7" height="8" fill="#fff" stroke="#555" stroke-width="0.8"/>
 <path d="M507 583 V587 M505 585 H509" stroke="#2f6fc0" stroke-width="0.8"/>
 <!-- px dropdown -->
 <path d="M610.5 590.5 H614.5 L612.5 588 Z" fill="#222"/>
 <!-- zoom to window -->
 <rect x="655" y="583.5" width="12" height="12" rx="1" fill="none" stroke="#777" stroke-width="0.9" stroke-dasharray="1.2 0.8"/>
 <rect x="657.5" y="586" width="7" height="7" fill="#fff" stroke="#555" stroke-width="0.8"/>
 <path d="M658.3 592 L660.5 589 L662 590.5 L663.8 588.3 V592 Z" fill="#2f6fc0"/>
 <!-- zoom out -->
 <circle cx="682" cy="588.5" r="4" fill="none" stroke="#555" stroke-width="1.3"/>
 <path d="M684.8 591.3 L688.5 595" stroke="#555" stroke-width="1.6"/>
 <path d="M680 588.5 H684" stroke="#2f6fc0" stroke-width="1.1"/>
 <!-- slider -->
 <rect x="697" y="588" width="69" height="1" fill="#8a8a8a"/>
 <path d="M728.5 584.5 H735 V591.5 L731.75 594.5 L728.5 591.5 Z" fill="#f3f3f3" stroke="#666" stroke-width="0.8"/>
 <!-- zoom in -->
 <circle cx="777.5" cy="588.5" r="4" fill="none" stroke="#555" stroke-width="1.3"/>
 <path d="M780.3 591.3 L784 595" stroke="#555" stroke-width="1.6"/>
 <path d="M775.5 588.5 H779.5 M777.5 586.5 V590.5" stroke="#2f6fc0" stroke-width="1.1"/>
 <!-- grip -->
 <g fill="#aaa"><rect x="795.5" y="589" width="1.3" height="1.3"/><rect x="792.5" y="592" width="1.3" height="1.3"/><rect x="795.5" y="592" width="1.3" height="1.3"/><rect x="789.5" y="595" width="1.3" height="1.3"/><rect x="792.5" y="595" width="1.3" height="1.3"/><rect x="795.5" y="595" width="1.3" height="1.3"/></g>
</svg>

<div class="a" style="left:0;top:0;width:1px;height:580px;background:#e6e6e6"></div>
<div class="a" style="left:0;top:0;width:800px;height:1px;background:#ededed"></div>
</body></html>
